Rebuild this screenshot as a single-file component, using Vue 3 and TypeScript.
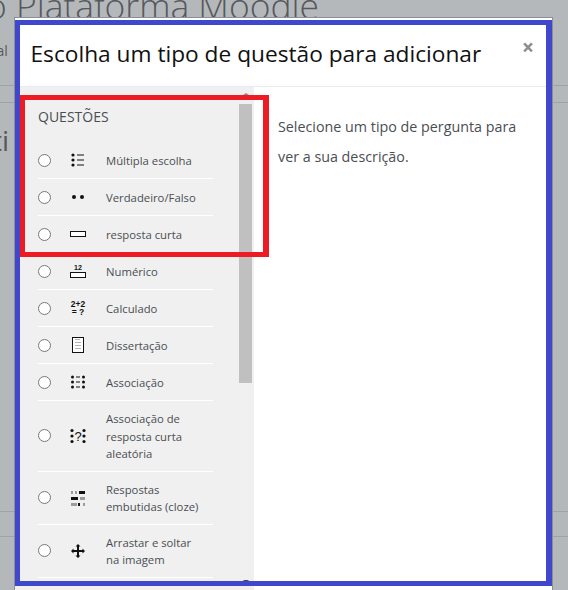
<template>
  <div class="page">
    <div class="bg-title">o Plataforma Moodle</div>
    <div class="bg-sub">nal</div>
    <div class="bg-rule first"></div>
    <div class="bg-rule second"></div>
    <div class="bg-heading">ti</div>
    <div class="bg-rule third"></div>
    <div class="bg-rule fourth"></div>

    <div class="modal">
      <header class="modal-header">
        <h5 class="modal-title">Escolha um tipo de questão para adicionar</h5>
        <span class="close">×</span>
      </header>
      <div class="modal-body">
        <aside class="chooser">
          <div class="options">
            <div class="section-label">QUESTÕES</div>
            <label v-for="q in questions" :key="q.name" class="option">
              <input type="radio" name="qtype" class="radio" />
              <svg class="icon" width="16" height="16" viewBox="0 0 16 16">
                <template v-if="q.icon === 'multichoice'">
                  <circle cx="3" cy="3" r="1.6" />
                  <circle cx="3" cy="8" r="1.6" />
                  <circle cx="3" cy="13" r="1.6" />
                  <path d="M7 3h7M7 8h7M7 13h7" class="line" />
                </template>
                <template v-else-if="q.icon === 'truefalse'">
                  <circle cx="4" cy="8" r="2" />
                  <circle cx="12" cy="8" r="2" />
                </template>
                <rect v-else-if="q.icon === 'shortanswer'" x="0.5" y="5.5" width="15" height="5" class="box" />
                <template v-else-if="q.icon === 'numerical'">
                  <text x="8" y="7" class="tiny">12</text>
                  <rect x="0.5" y="9.5" width="15" height="5" class="box" />
                </template>
                <template v-else-if="q.icon === 'calculated'">
                  <text x="8" y="6.5" class="small">2+2</text>
                  <text x="8" y="15" class="small">= ?</text>
                </template>
                <template v-else-if="q.icon === 'essay'">
                  <rect x="2.5" y="0.5" width="11" height="15" class="box" />
                  <path d="M5 2.500h5M5 5.500h6M5 8.500h6M5 11.500h6" class="soft" />
                </template>
                <template v-else-if="q.icon === 'match'">
                  <circle cx="2.5" cy="3" r="1.5" /><circle cx="13.5" cy="3" r="1.5" />
                  <circle cx="2.5" cy="8" r="1.5" /><circle cx="13.5" cy="8" r="1.5" />
                  <circle cx="2.5" cy="13" r="1.5" /><circle cx="13.5" cy="13" r="1.5" />
                  <path d="M6 3h4M6 8h4M6 13h4" class="line" />
                </template>
                <template v-else-if="q.icon === 'randomsam'">
                  <circle cx="2" cy="2.5" r="1.6" /><circle cx="14" cy="2.5" r="1.6" />
                  <circle cx="2" cy="8" r="1.6" /><circle cx="14" cy="8" r="1.6" />
                  <circle cx="2" cy="13.5" r="1.6" /><circle cx="14" cy="13.5" r="1.6" />
                  <text x="8" y="13" class="mark">?</text>
                </template>
                <template v-else-if="q.icon === 'multianswer'">
                  <path d="M1 1h2v3H1zM5 1h2v3H5zM10 7h5v3h-5zM1 13h6v3H1zM13 13h2v3h-2z" class="grey" />
                  <path d="M9 1h6v3H9zM1 7h7v3H1zM8 13h2v3H8z" />
                </template>
                <path
                  v-else-if="q.icon === 'ddimage'"
                  d="M8 1l2.500 2.500H9V7h3.500V5.500L15 8l-2.500 2.500V9H9v3.500h1.500L8 15l-2.500-2.500H7V9H3.500v1.500L1 8l2.500-2.500V7H7V3.500H5.500z"
                />
              </svg>
              <span class="name">{{ q.name }}</span>
            </label>
          </div>
          <div class="scrollbar">
            <span class="arrow up"></span>
            <div class="thumb"></div>
            <span class="arrow down"></span>
          </div>
        </aside>
        <section class="summary">
          Selecione um tipo de pergunta para ver a sua descrição.
        </section>
      </div>
    </div>

    <div class="mark-blue"></div>
    <div class="mark-red"></div>
  </div>
</template>

<script setup lang="ts">
interface Question {
  name: string;
  icon: string;
}

const questions: Question[] = [
  { name: 'Múltipla escolha', icon: 'multichoice' },
  { name: 'Verdadeiro/Falso', icon: 'truefalse' },
  { name: 'resposta curta', icon: 'shortanswer' },
  { name: 'Numérico', icon: 'numerical' },
  { name: 'Calculado', icon: 'calculated' },
  { name: 'Dissertação', icon: 'essay' },
  { name: 'Associação', icon: 'match' },
  { name: 'Associação de resposta curta aleatória', icon: 'randomsam' },
  { name: 'Respostas embutidas (cloze)', icon: 'multianswer' },
  { name: 'Arrastar e soltar na imagem', icon: 'ddimage' },
];
</script>

<style>
html,
body {
  margin: 0;
  overflow: hidden;
}
</style>

<style scoped>
.page {
  position: relative;
  width: 568px;
  height: 590px;
  overflow: hidden;
  background: #b5b8ba;
  font-family: "Open Sans", "Noto Sans", sans-serif;
  color: #373a3c;
}

.bg-title {
  margin: -17px 0 0 -14px;
  font-size: 35.400px;
  line-height: 44px;
  font-weight: 300;
  white-space: nowrap;
  color: #55595d;
}

.bg-sub {
  margin: 14px 0 0 -12px;
  font-size: 14px;
  line-height: 20px;
  color: #55595d;
}

.bg-rule {
  height: 1px;
  background: #a0a2a4;
}

.bg-rule.first {
  margin-top: 24px;
}

.bg-rule.second {
  margin-top: 16px;
}

.bg-heading {
  margin: 17px 0 0 -8px;
  font-size: 28px;
  line-height: 40px;
  color: #55595d;
}

.bg-rule.third {
  margin-top: 351px;
}

.bg-rule.fourth {
  margin-top: 24px;
}

.modal {
  position: absolute;
  left: 14px;
  top: 17px;
  width: 537px;
  height: 600px;
  display: flex;
  flex-direction: column;
  background: #fff;
  border: 1px solid #8c8f91;
}

.modal-header {
  display: flex;
  align-items: flex-start;
  justify-content: space-between;
  height: 68px;
  padding: 0 18px 0 15.500px;
  border-bottom: 1px solid #e9ecef;
  flex-shrink: 0;
}

.modal-title {
  margin: 19px 0 0;
  font-size: 22.700px;
  line-height: 34px;
  font-weight: 400;
  white-space: nowrap;
  color: #111;
}

.close {
  margin-top: 16px;
  font-size: 21px;
  line-height: 26px;
  font-weight: 700;
  color: #8b8b8b;
}

.modal-body {
  display: flex;
  flex: 1;
  min-height: 0;
}

.chooser {
  display: flex;
  width: 239px;
  background: #f0f0f0;
  flex-shrink: 0;
}

.options {
  width: 223px;
  flex-shrink: 0;
  padding-left: 23px;
  box-sizing: border-box;
}

.section-label {
  margin-top: 20px;
  margin-bottom: 15px;
  font-size: 14px;
  line-height: 20px;
  color: #4a4e52;
}

.option {
  display: flex;
  align-items: center;
  width: 175px;
  min-height: 37px;
  padding: 8px 0;
  box-sizing: border-box;
  border-bottom: 1px solid #fff;
  font-size: 11.300px;
  line-height: 17.500px;
}

.radio {
  margin: 0;
  width: 13px;
  height: 13px;
  flex-shrink: 0;
}

.icon {
  margin-left: 19px;
  flex-shrink: 0;
  fill: #111;
}

.name {
  margin-left: 20px;
  padding-top: 1px;
  width: 100px;
  color: #4a4e52;
}

.line {
  fill: none;
  stroke: #111;
  stroke-width: 1;
}

.box {
  fill: #fff;
  stroke: #111;
  stroke-width: 1;
}

.soft {
  fill: none;
  stroke: #b4b4b4;
  stroke-width: 1;
}

.grey {
  fill: #9c9c9c;
}

.tiny,
.small,
.mark {
  font-family: "Liberation Sans", sans-serif;
  text-anchor: middle;
  font-weight: 700;
}

.tiny {
  font-size: 7px;
}

.small {
  font-size: 8.500px;
}

.mark {
  font-size: 13px;
  font-weight: 400;
}

.scrollbar {
  display: flex;
  flex-direction: column;
  align-items: center;
  width: 13px;
  margin-left: 1px;
}

.arrow {
  width: 0;
  height: 0;
  border-left: 3px solid transparent;
  border-right: 3px solid transparent;
}

.arrow.up {
  margin-top: 6px;
  border-bottom: 2px solid #8e8e8e;
}

.arrow.down {
  margin-top: 197px;
  border-top: 3px solid #4a4a4a;
}

.thumb {
  width: 13px;
  height: 279px;
  margin-top: 9px;
  background: #c0c0c0;
}

.summary {
  flex: 1;
  padding: 25px 30px 0 24px;
  font-size: 14.300px;
  line-height: 30px;
  color: #4a4e52;
}

.mark-blue {
  position: absolute;
  left: 15px;
  top: 20px;
  width: 537px;
  height: 566px;
  box-sizing: border-box;
  border: 5px solid #3f48cc;
  border-right-width: 6px;
}

.mark-red {
  position: absolute;
  left: 20px;
  top: 95px;
  width: 249px;
  height: 162px;
  box-sizing: border-box;
  border: 5px solid #ed1c24;
  border-right-width: 6px;
}
</style>
